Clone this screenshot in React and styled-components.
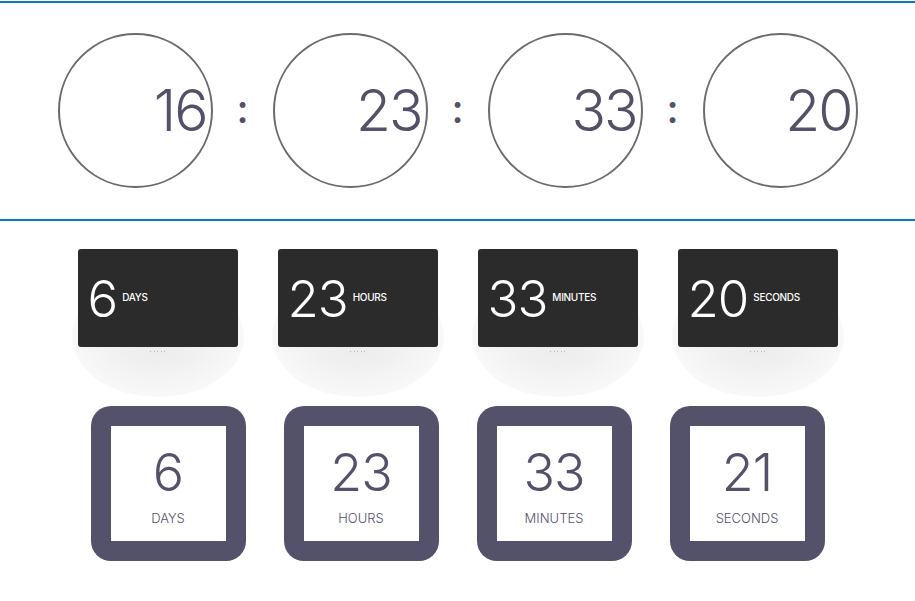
import styled, { createGlobalStyle } from "styled-components";

const GlobalStyle = createGlobalStyle`
  body {
    margin: 0;
    background: #fff;
    font-family: "Inter", "Liberation Sans", sans-serif;
  }
`;

const units = [
  { value: 6, label: "Days" },
  { value: 23, label: "Hours" },
  { value: 33, label: "Minutes" },
  { value: 20, label: "Seconds" },
];

const clock = [16, 23, 33, 20];

function App() {
  return (
    <>
      <GlobalStyle />
      <Page>
        <ClockBand>
          {clock.map((v, i) => (
            <ClockItem key={i}>
              {i > 0 && <Colon>:</Colon>}
              <Ring>
                <RingNumber>{v}</RingNumber>
              </Ring>
            </ClockItem>
          ))}
        </ClockBand>

        <CardRow>
          {units.map((u) => (
            <CardSlot key={u.label}>
              <DarkCard>
                <CardNumber>{u.value}</CardNumber>
                <CardLabel>{u.label}</CardLabel>
              </DarkCard>
              <Dots>
                <span />
                <span />
                <span />
                <span />
                <span />
              </Dots>
            </CardSlot>
          ))}
        </CardRow>

        <FrameRow>
          {units.map((u, i) => (
            <Frame key={u.label}>
              <FrameInner>
                <FrameNumber>{i === 3 ? 21 : u.value}</FrameNumber>
                <FrameLabel>{u.label}</FrameLabel>
              </FrameInner>
            </Frame>
          ))}
        </FrameRow>
      </Page>
    </>
  );
}

export default App;

const Page = styled.div`
  padding-top: 1px;
  width: 915px;
`;

const ClockBand = styled.div`
  display: flex;
  justify-content: center;
  border-top: 2px solid #0a7bbf;
  border-bottom: 2px solid #0a7bbf;
  padding: 30px 0 31px;
`;

const ClockItem = styled.div`
  display: flex;
  align-items: center;
`;

const Colon = styled.span`
  width: 60px;
  text-align: center;
  font-family: "Inter", sans-serif;
  font-weight: 500;
  font-size: 40px;
  color: #535068;
  line-height: 1;
  margin-top: -4px;
`;

const Ring = styled.div`
  width: 147px;
  height: 151px;
  border: 2px solid #6b6a70;
  border-radius: 50%;
  display: flex;
  align-items: center;
  justify-content: flex-end;
  padding-right: 4px;
  box-sizing: content-box;
`;

const RingNumber = styled.span`
  font-family: "Inter", sans-serif;
  font-weight: 300;
  font-size: 57px;
  letter-spacing: -2px;
  color: #535068;
  line-height: 1;
`;

const CardRow = styled.div`
  display: flex;
  justify-content: center;
  gap: 40px;
  padding-top: 28px;
  height: 130px;
`;

const CardSlot = styled.div`
  position: relative;
  width: 160px;

  /* soft glow sitting under the card */
  &::before {
    content: "";
    position: absolute;
    left: -6px;
    top: 28px;
    width: 172px;
    height: 120px;
    border-radius: 50%;
    background: radial-gradient(
      ellipse at 50% 50%,
      #ebebeb 0%,
      #f0f0f0 35%,
      #f6f6f6 60%,
      #fbfbfb 82%,
      rgba(255, 255, 255, 0) 100%
    );
    z-index: 0;
  }
`;

const DarkCard = styled.div`
  position: relative;
  z-index: 1;
  height: 98px;
  background: #2b2b2b;
  border-radius: 3px;
  display: flex;
  align-items: center;
  padding-left: 10px;
  color: #fff;
`;

const CardNumber = styled.span`
  font-family: "Inter", sans-serif;
  font-weight: 300;
  font-size: 51px;
  letter-spacing: -1px;
  line-height: 1;
`;

const CardLabel = styled.span`
  font-family: "Inter", sans-serif;
  font-size: 10px;
  font-weight: 500;
  text-transform: uppercase;
  letter-spacing: -0.3px;
  margin-left: 5px;
  margin-top: -3px;
`;

const Dots = styled.div`
  position: relative;
  z-index: 1;
  display: flex;
  justify-content: center;
  gap: 2.5px;
  margin-top: 4px;

  span {
    width: 1px;
    height: 1px;
    background: #b8b8b8;
  }
`;

const FrameRow = styled.div`
  display: flex;
  justify-content: center;
  gap: 38px;
  padding-top: 27px;
`;

const Frame = styled.div`
  width: 115px;
  height: 115px;
  padding: 20px;
  background: #54516b;
  border-radius: 20px;
`;

const FrameInner = styled.div`
  height: 100%;
  background: #fff;
  display: flex;
  flex-direction: column;
  align-items: center;
  color: #54516b;
`;

const FrameNumber = styled.span`
  font-family: "Inter", sans-serif;
  font-weight: 300;
  font-size: 52px;
  letter-spacing: -1px;
  line-height: 1;
  margin-top: 21px;
`;

const FrameLabel = styled.span`
  font-family: "Inter", sans-serif;
  font-weight: 300;
  font-size: 13px;
  text-transform: uppercase;
  margin-top: 11px;
`;
